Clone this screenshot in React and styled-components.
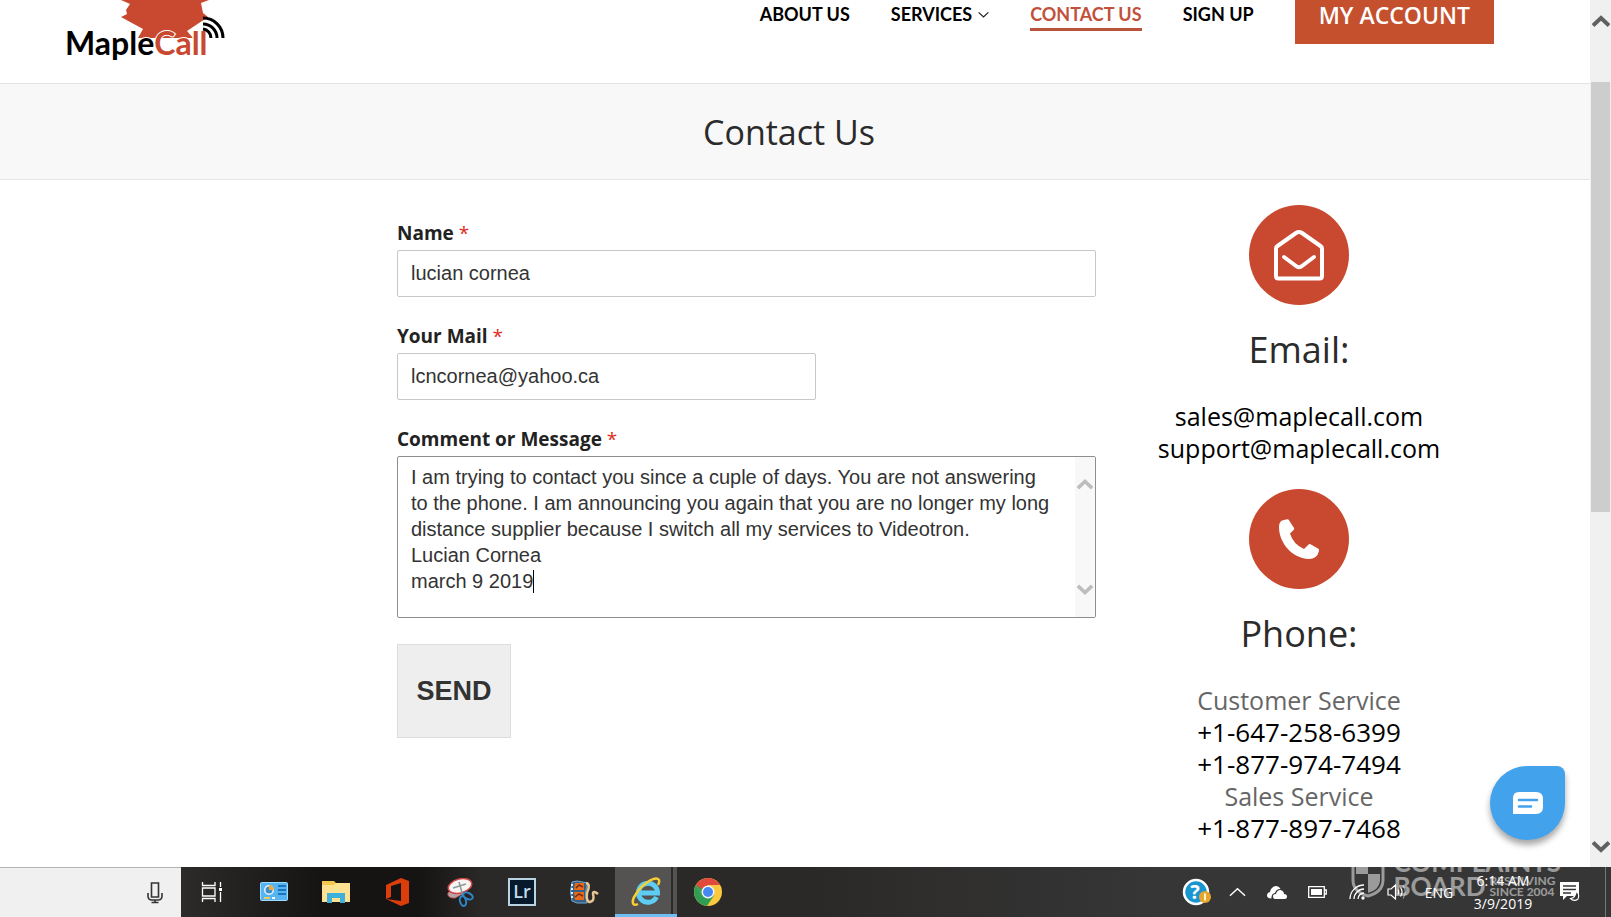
import React, { useState } from 'react'
import styled, { createGlobalStyle } from 'styled-components';

const GlobalStyle = createGlobalStyle`
    * { box-sizing: border-box; }
    body {
        margin: 0;
        background: #fff;
        font-family: "Open Sans", "Noto Sans", sans-serif;
        color: #2b2b2b;
    }
    h1, h2, p { margin: 0; font-weight: 400; }
    a { color: inherit; text-decoration: none; }
    svg { display: block; flex-shrink: 0; }
`;

const Screen = styled.div`
    position: relative;
    display: flex;
    flex-direction: column;
    height: 100vh;
    overflow: hidden;
`;
const Browser = styled.div`
    flex: 1;
    min-height: 0;
    display: flex;
`;
const Page = styled.div`
    flex: 1;
    min-width: 0;
    overflow: hidden;
`;

/* header */
const Header = styled.header`
    display: flex;
    justify-content: space-between;
    align-items: flex-start;
    height: 84px;
    padding: 0 96px 0 64px;
    border-bottom: 1px solid #e4e4e4;
`;
const Logo = styled.a`
    display: block;
`;
const Nav = styled.nav`
    display: flex;
    align-items: flex-start;
    gap: 41px;
    font-family: Lato, sans-serif;
    font-size: 18px;
    font-weight: 700;
    line-height: 28px;
    color: #000;
`;
const NavLink = styled.a`
    display: flex;
    align-items: center;
    gap: 6px;
    height: 31px;
    white-space: nowrap;
    color: ${props => props.$active ? '#c1513a' : '#000'};
    border-bottom: 3px solid ${props => props.$active ? '#b9533a' : 'transparent'};
`;
const AccountLink = styled.a`
    height: 44px;
    padding: 0 24px;
    background: #c4502e;
    color: #fff;
    font-family: "Open Sans", sans-serif;
    font-size: 23px;
    font-weight: 600;
    line-height: 30px;
    white-space: nowrap;
`;

/* title */
const TitleBar = styled.div`
    height: 96px;
    padding-right: 12px;
    background: #f8f8f8;
    border-bottom: 1px solid #e6e6e6;
    text-align: center;
`;
const Title = styled.h1`
    font-size: 34px;
    line-height: 96px;
`;

/* content */
const Content = styled.main`
    display: grid;
    grid-template-columns: 397fr 699fr 494fr;
`;
const Form = styled.form`
    grid-column: 2;
    padding-top: 40px;
`;
const Field = styled.div`
    margin-bottom: 26px;
`;
const Label = styled.label`
    display: block;
    height: 30px;
    font-size: 19px;
    font-weight: 700;
    line-height: 26px;
    color: #222;
`;
const Required = styled.span`
    color: #e02b20;
    font-weight: 400;
`;
const Input = styled.input`
    display: block;
    width: ${props => props.$short ? '60%' : '100%'};
    height: 47px;
    padding: 0 13px;
    border: 1px solid #c8c8c8;
    border-radius: 2px;
    background: #fff;
    color: #333;
    font-family: "Liberation Sans", Arial, sans-serif;
    font-size: 20px;
    outline: none;
`;
const MessageBox = styled.div`
    position: relative;
    display: flex;
    height: 162px;
    border: 1px solid #8e8e8e;
    border-radius: 2px;
`;
const TextArea = styled.textarea`
    flex: 1;
    padding: 7px 20px 7px 13px;
    border: 0;
    outline: none;
    resize: none;
    overflow: hidden;
    background: transparent;
    color: #333;
    caret-color: transparent;
    font-family: "Liberation Sans", Arial, sans-serif;
    font-size: 20px;
    line-height: 26px;
`;
const Caret = styled.span`
    position: absolute;
    left: 135px;
    top: 113px;
    width: 1px;
    height: 23px;
    background: #000;
`;
const Gutter = styled.div`
    display: flex;
    flex-direction: column;
    justify-content: space-between;
    align-items: center;
    width: 20px;
    padding: 20px 0;
    background: #f8f8f8;
`;
const SendButton = styled.button`
    display: block;
    width: 114px;
    height: 94px;
    padding: 0;
    border: 1px solid #ddd;
    background: #eee;
    color: #333;
    font-family: "Liberation Sans", Arial, sans-serif;
    font-size: 27px;
    font-weight: 700;
`;

/* contact column */
const Aside = styled.aside`
    padding: 25px 88px 0 0;
    text-align: center;
`;
const Circle = styled.div`
    display: flex;
    justify-content: center;
    align-items: center;
    width: 100px;
    height: 100px;
    margin: 0 auto;
    border-radius: 50%;
    background: #c8492f;
`;
const Heading = styled.h2`
    padding: 19px 0 24px;
    font-size: 36px;
    line-height: 52px;
`;
const Details = styled.p`
    display: flex;
    flex-direction: column;
    margin-bottom: 25px;
    font-size: 25px;
    line-height: 32px;
    color: #666;
`;
const MailLink = styled.a`
    color: #000;
`;
const PhoneLink = styled.a`
    color: #000;
    font-size: 26px;
`;

const ChatButton = styled.button`
    position: absolute;
    right: 46px;
    bottom: 77px;
    display: flex;
    justify-content: center;
    align-items: center;
    width: 75px;
    height: 74px;
    padding: 0;
    border: 0;
    border-radius: 50% 8px 50% 50%;
    background: #43a2ec;
    box-shadow: 0 5px 6px rgba(0, 0, 0, .35);
`;

/* scrollbar */
const Scrollbar = styled.div`
    display: flex;
    flex-direction: column;
    align-items: center;
    width: 21px;
    background: #f0f0f0;
`;
const ScrollArrow = styled.div`
    display: flex;
    justify-content: center;
    align-items: center;
    height: 43px;
`;
const Track = styled.div`
    flex: 1;
    width: 19px;
    padding-top: 39px;
`;
const Thumb = styled.div`
    height: 58%;
    background: #cdcdcd;
`;

/* taskbar */
const Taskbar = styled.footer`
    display: flex;
    height: 50px;
    color: #fff;
    background: linear-gradient(90deg, #2e2c2b 11%, #151413 20%, #151413 26%, #2a2928 30%, #2b2928 50%, #363636 72%);
`;
const Search = styled.div`
    display: flex;
    justify-content: flex-end;
    align-items: center;
    width: 181px;
    padding-right: 18px;
    background: #f0f0f0;
    border-top: 1px solid #b4b4b4;
`;
const Apps = styled.div`
    display: flex;
    flex: 1;
`;
const AppButton = styled.button`
    display: flex;
    justify-content: center;
    align-items: center;
    width: 62px;
    padding: 0;
    border: 0;
    background: ${props => props.$active ? 'linear-gradient(90deg, #555352 56px, #2c2b2b 56px, #2c2b2b 58px, #555352 58px)' : 'none'};
    box-shadow: ${props => props.$active ? 'inset 0 -3px #6fbdf2' : 'none'};
`;
const Tray = styled.div`
    display: flex;
`;
const TrayItem = styled.div`
    display: flex;
    justify-content: center;
    align-items: center;
    width: ${props => props.$width || 40}px;
    font-size: 14px;
    text-align: center;
    line-height: 23px;
`;
const ShowDesktop = styled.div`
    width: 6px;
    margin-left: 10px;
    border-left: 1px solid #777;
`;
const Watermark = styled.div`
    position: absolute;
    right: 50px;
    bottom: 19px;
    display: flex;
    align-items: flex-end;
    gap: 8px;
    color: #fff;
    opacity: .5;
    font-family: Lato, sans-serif;
    font-weight: 700;
    pointer-events: none;
`;
const MarkName = styled.div`
    font-size: 26px;
    line-height: 24px;
`;
const MarkRow = styled.div`
    display: flex;
    align-items: center;
    gap: 4px;
`;
const MarkNote = styled.div`
    font-size: 12px;
    line-height: 11px;
`;

function Chevron({ size, color, width, up }) {
    return (
        <svg width={size} height={size} viewBox="0 0 18 18" fill="none" stroke={color} strokeWidth={width}>
            <path d={up ? 'M1 12.5 L9 5 L17 12.5' : 'M1 5.5 L9 13 L17 5.5'} />
        </svg>
    )
}

function MapleLogo() {
    return (
        <svg width="164" height="64" viewBox="0 0 164 64">
            <path fill="#c8492f" d="M57 0 L66 4 L62 10 L63 14 L57 17 L79 29 L74 38 H129 L123 31 L144 17 L139 13 L137 3 L145 0 Z" />
            <text x="1" y="55" fontFamily="Lato, sans-serif" fontWeight="700" fontSize="32" fill="#000" stroke="#fff" strokeWidth="2" paintOrder="stroke">
                Maple<tspan fill="#c8492f">Call</tspan>
            </text>
            <g fill="none" stroke="#000" strokeWidth="3">
                <path d="M139 29 A9 9 0 0 1 147 38" />
                <path d="M139 24 A14 14 0 0 1 153 38" />
                <path d="M139 18 A20 20 0 0 1 159 38" />
            </g>
        </svg>
    )
}

const apps = [
    {
        name: 'Task View', icon: (
            <svg width="22" height="22" viewBox="0 0 22 22" fill="none" stroke="#fff" strokeWidth="1.3">
                <path d="M1.500 1V4.500H14V1M1.500 21V17.500H14V21M1.500 7H14V15H1.500ZM19.500 1V6M19.500 11V21" />
                <path fill="#fff" stroke="none" d="M18 7h3v3h-3z" />
            </svg>
        )
    },
    {
        name: 'Control Panel', icon: (
            <svg width="28" height="20" viewBox="0 0 28 20">
                <rect x=".5" y=".5" width="27" height="18" rx="1" fill="#58b4f0" stroke="#9bdcff" />
                <circle cx="9" cy="8" r="5" fill="#e8f6ff" />
                <circle cx="9" cy="8" r="3.500" fill="#3b8fca" />
                <path d="M9 8V3A5 5 0 0 1 14 8Z" fill="#f3a83b" />
                <path d="M18 4h8M18 8h8M18 12h8" stroke="#1976bd" strokeWidth="2" />
                <path d="M4 16h6" stroke="#e9cf62" strokeWidth="2" />
                <path d="M12 16h3" stroke="#fff" strokeWidth="2" />
            </svg>
        )
    },
    {
        name: 'File Explorer', icon: (
            <svg width="28" height="24" viewBox="0 0 28 24">
                <path d="M0 1H12L14 3H27V22H0Z" fill="#f2c94c" />
                <path d="M0 5H12L14 3H28V22H0Z" fill="#fde391" />
                <path d="M5 23V13H23V23H18V18H10V23Z" fill="#3fb0dc" />
            </svg>
        )
    },
    {
        name: 'Office', icon: (
            <svg width="24" height="28" viewBox="0 0 24 28">
                <path fill="#dc3e0b" d="M0 7 L15 0 L23 3 V25 L15 28 L0 21 L15 23 V5 L5 8 V19 L0 21 Z" />
            </svg>
        )
    },
    {
        name: 'Snipping Tool', icon: (
            <svg width="28" height="29" viewBox="0 0 28 29">
                <path d="M2 15Q6 11 16 16L9 20Q1 20 2 15Z" fill="#b9a3a5" stroke="#c86c70" />
                <ellipse cx="14" cy="8" rx="12" ry="7" transform="rotate(-15 14 8)" fill="#f8f4f4" stroke="#d04848" strokeWidth="1.500" />
                <path d="M13 4L17 18M20 6L7 10" stroke="#8a9c95" strokeWidth="1.500" />
                <ellipse cx="22" cy="18" rx="5" ry="3" transform="rotate(25 22 18)" fill="none" stroke="#2d86c7" strokeWidth="2" />
                <ellipse cx="17" cy="23" rx="3" ry="5" transform="rotate(-15 17 23)" fill="none" stroke="#2d86c7" strokeWidth="2" />
            </svg>
        )
    },
    {
        name: 'Lightroom', icon: (
            <svg width="28" height="28" viewBox="0 0 28 28">
                <rect x="1" y="1" width="26" height="26" fill="#071a2b" stroke="#b8d4e3" strokeWidth="2" />
                <text x="14" y="20" textAnchor="middle" fontFamily="Open Sans, sans-serif" fontWeight="600" fontSize="18" fill="#c3dcea">Lr</text>
            </svg>
        )
    },
    {
        name: 'Movie Maker', icon: (
            <svg width="30" height="24" viewBox="0 0 30 24">
                <path d="M3 2Q0 12 3 21L8 23H18Q15 12 19 3L8 1Z" fill="#365f83" stroke="#6eabd2" />
                <path d="M6 3H15V10H5ZM5 12H15V20H6Z" fill="#e86b1d" />
                <path d="M7 8L10 5L14 7M6 17L10 14L14 16" stroke="#732e13" fill="none" strokeWidth="1.500" />
                <path d="M2 5h2M2 9h2M2 13h2M2 17h2" stroke="#dcebf4" strokeWidth="2" />
                <path d="M17 3Q22 4 18 13Q17 22 21 22Q26 21 24 14Q24 10 29 14" stroke="#e6c793" strokeWidth="2.500" fill="none" />
            </svg>
        )
    },
    {
        name: 'Internet Explorer', active: true, icon: (
            <svg width="30" height="30" viewBox="0 0 30 30" fill="none">
                <path d="M25.500 20A9.500 9.500 0 1 1 26.500 16H9" stroke="#5ecdf3" strokeWidth="5" />
                <path d="M7 27C1 30 0 24 5 17C11 7 23 0 27 2C29 3 28 6 27 8" stroke="#f5cf33" strokeWidth="2.500" />
            </svg>
        )
    },
    {
        name: 'Chrome', icon: (
            <svg width="28" height="28" viewBox="0 0 28 28">
                <circle cx="14" cy="14" r="14" fill="#fbc940" />
                <path d="M1.900 7A14 14 0 0 0 13 28L20 17.500L14 14L8 17.500Z" fill="#2f9e54" />
                <path d="M1.900 7L8 17.500L14 7Z" fill="#2f9e54" />
                <path d="M1.900 7A14 14 0 0 1 26.100 7H14L8 11Z" fill="#e0493b" />
                <circle cx="14" cy="14" r="6.500" fill="#f4f4f4" />
                <circle cx="14" cy="14" r="5" fill="#4688f1" />
            </svg>
        )
    },
]

const menu = [
    { text: 'ABOUT US' },
    { text: 'SERVICES', drop: true },
    { text: 'CONTACT US', active: true },
    { text: 'SIGN UP' },
]

const text = `I am trying to contact you since a cuple of days. You are not answering to the phone. I am announcing you again that you are no longer my long distance supplier because I switch all my services to Videotron.
Lucian Cornea
march 9 2019`

function App() {

    const [Name, setName] = useState('lucian cornea')
    const [Mail, setMail] = useState('lcncornea@yahoo.ca')
    const [Message, setMessage] = useState(text)

    const renderApps = apps.map((app) => (
        <AppButton key={app.name} type="button" aria-label={app.name} $active={app.active}>{app.icon}</AppButton>
    ))

    return (
        <Screen>
            <GlobalStyle />
            <Browser>
                <Page>
                    <Header>
                        <Logo href="#" aria-label="MapleCall"><MapleLogo /></Logo>
                        <Nav>
                            {menu.map((item) => (
                                <NavLink key={item.text} href="#" $active={item.active}>
                                    {item.text}
                                    {item.drop && <Chevron size={11} color="#222" width={2} />}
                                </NavLink>
                            ))}
                            <AccountLink href="#">MY ACCOUNT</AccountLink>
                        </Nav>
                    </Header>
                    <TitleBar><Title>Contact Us</Title></TitleBar>
                    <Content>
                        <Form onSubmit={(e) => e.preventDefault()}>
                            <Field>
                                <Label htmlFor="name">Name <Required>*</Required></Label>
                                <Input id="name" value={Name} onChange={(e) => setName(e.target.value)} />
                            </Field>
                            <Field>
                                <Label htmlFor="mail">Your Mail <Required>*</Required></Label>
                                <Input id="mail" $short value={Mail} onChange={(e) => setMail(e.target.value)} />
                            </Field>
                            <Field>
                                <Label htmlFor="message">Comment or Message <Required>*</Required></Label>
                                <MessageBox>
                                    <TextArea id="message" value={Message} onChange={(e) => setMessage(e.target.value)} />
                                    <Caret />
                                    <Gutter>
                                        <Chevron size={16} color="#bdbdbd" width={4} up />
                                        <Chevron size={16} color="#bdbdbd" width={4} />
                                    </Gutter>
                                </MessageBox>
                            </Field>
                            <SendButton type="submit">SEND</SendButton>
                        </Form>
                        <Aside>
                            <Circle>
                                <svg width="52" height="52" viewBox="0 0 52 52" fill="none" stroke="#fff" strokeWidth="4" strokeLinecap="round" strokeLinejoin="round">
                                    <path d="M3 19.500Q3 18 4.500 17L23 4Q26 2 29 4L47.500 17Q49 18 49 19.500V47Q49 49.500 46.500 49.500H5.500Q3 49.500 3 47Z" />
                                    <path d="M11 28L23 37Q26 39.500 29 37L41 28" />
                                </svg>
                            </Circle>
                            <Heading>Email:</Heading>
                            <Details>
                                <MailLink href="mailto:sales@maplecall.com">sales@maplecall.com</MailLink>
                                <MailLink href="mailto:support@maplecall.com">support@maplecall.com</MailLink>
                            </Details>
                            <Circle>
                                <svg width="40" height="40" viewBox="0 0 40 40" fill="#fff">
                                    <path d="M3 1.500L8 .2Q9.500 0 10 1.200L15 9Q15.500 10 14.500 11L11 14.500Q14 25 25 30L29.500 25.500Q30.500 24.700 31.500 25.200L39 29.500Q40.500 30.500 40 32Q38 40 30 40C12 39 0 23 0 8Q0 3 3 1.500Z" />
                                </svg>
                            </Circle>
                            <Heading>Phone:</Heading>
                            <Details>
                                <span>Customer Service</span>
                                <PhoneLink href="tel:+16472586399">+1-647-258-6399</PhoneLink>
                                <PhoneLink href="tel:+18779747494">+1-877-974-7494</PhoneLink>
                                <span>Sales Service</span>
                                <PhoneLink href="tel:+18778977468">+1-877-897-7468</PhoneLink>
                            </Details>
                        </Aside>
                    </Content>
                </Page>
                <Scrollbar>
                    <ScrollArrow><Chevron size={18} color="#606060" width={4} up /></ScrollArrow>
                    <Track><Thumb /></Track>
                    <ScrollArrow><Chevron size={18} color="#606060" width={4} /></ScrollArrow>
                </Scrollbar>
            </Browser>
            <ChatButton type="button" aria-label="Chat">
                <svg width="30" height="22" viewBox="0 0 30 22">
                    <path fill="#fff" d="M6 0H23Q30 0 30 7V15Q30 22 23 22H0V6Q0 0 6 0Z" />
                    <path d="M6 8H24M6 14.500H18" stroke="#43a2ec" strokeWidth="2.500" strokeLinecap="round" />
                </svg>
            </ChatButton>
            <Taskbar>
                <Search>
                    <svg width="16" height="22" viewBox="0 0 16 22" fill="none" stroke="#333" strokeWidth="1.600">
                        <path d="M4.500 1H11.500V15H4.500ZM1 11V14Q1 18 5 18H11Q15 18 15 14V11M8 18V21M4.500 20.500H11.500" />
                    </svg>
                </Search>
                <Apps>{renderApps}</Apps>
                <Tray>
                    <TrayItem>
                        <svg width="30" height="28" viewBox="0 0 30 28">
                            <circle cx="14" cy="14" r="12" fill="#1996cf" stroke="#fff" strokeWidth="2.500" />
                            <text x="13" y="21" textAnchor="middle" fontFamily="Open Sans, sans-serif" fontWeight="700" fontSize="20" fill="#fff">?</text>
                            <circle cx="23" cy="19" r="6" fill="#e8a52c" />
                            <path d="M23 15.500V22.500" stroke="#fff3cf" strokeWidth="2" />
                        </svg>
                    </TrayItem>
                    <TrayItem><Chevron size={17} color="#fff" width={1.5} up /></TrayItem>
                    <TrayItem>
                        <svg width="20" height="13" viewBox="0 0 20 13" fill="#fff">
                            <path d="M0 9.500Q0 6.500 3 6Q4 1 8.500 0Q12 0 13.500 3Q9 3 8 7Q4 8 4.500 12.500Q0 12.500 0 9.500Z" />
                            <path d="M6 10Q6 8 9 8Q10 4 13.500 4Q17 5 17 8Q20 8 20 10.500Q20 13 17.500 13H8Q6 13 6 10Z" />
                        </svg>
                    </TrayItem>
                    <TrayItem>
                        <svg width="19" height="12" viewBox="0 0 19 12">
                            <path d="M.7.7H16.300V11.300H.7ZM16.500 4H18.300V8H16.500" fill="none" stroke="#fff" strokeWidth="1.300" />
                            <path d="M3 3H14V9H3Z" fill="#fff" />
                        </svg>
                    </TrayItem>
                    <TrayItem>
                        <svg width="17" height="16" viewBox="0 0 17 16" fill="none" stroke="#fff" strokeWidth="1.300">
                            <path d="M1 15A14 14 0 0 1 15 1M5 15A10 10 0 0 1 15 5M9 15A6 6 0 0 1 15 9" />
                            <circle cx="14" cy="14" r="1" fill="#fff" />
                        </svg>
                    </TrayItem>
                    <TrayItem>
                        <svg width="20" height="16" viewBox="0 0 20 16" fill="none" stroke="#fff" strokeWidth="1.200">
                            <path d="M1 5H4L8.500 1V15L4 11H1ZM11 5.500Q12.500 8 11 10.500M13.500 3.500Q16.500 8 13.500 12.500" />
                            <path d="M16 1.500Q20.500 8 16 14.500" stroke="#999" />
                        </svg>
                    </TrayItem>
                    <TrayItem $width={44}>ENG</TrayItem>
                    <TrayItem $width={84}>6:14 AM<br />3/9/2019</TrayItem>
                    <TrayItem $width={50}>
                        <svg width="20" height="20" viewBox="0 0 20 20">
                            <path d="M0 0H19V14H7L3 18V14H0Z" fill="#fff" />
                            <path d="M3 4H16M3 7.500H16M3 11H11" stroke="#363636" strokeWidth="1.300" />
                            <path d="M16 9Q20 12 18 17Q14 20 10.500 16.500Q16 15.500 16 9Z" fill="#363636" stroke="#fff" strokeWidth="1.200" />
                        </svg>
                    </TrayItem>
                    <ShowDesktop />
                </Tray>
            </Taskbar>
            <Watermark>
                <svg width="34" height="44" viewBox="0 0 34 44">
                    <path d="M2 2H32V26Q32 38 17 42Q2 38 2 26Z" fill="none" stroke="#fff" strokeWidth="3" />
                    <path d="M5 5H17V20H5ZM17 20H29V27Q28 36 17 39Z" fill="#fff" />
                </svg>
                <div>
                    <MarkName>COMPLAINTS</MarkName>
                    <MarkRow>
                        <MarkName>BOARD</MarkName>
                        <MarkNote>RESOLVING<br />SINCE 2004</MarkNote>
                    </MarkRow>
                </div>
            </Watermark>
        </Screen>
    )
}

export default App
